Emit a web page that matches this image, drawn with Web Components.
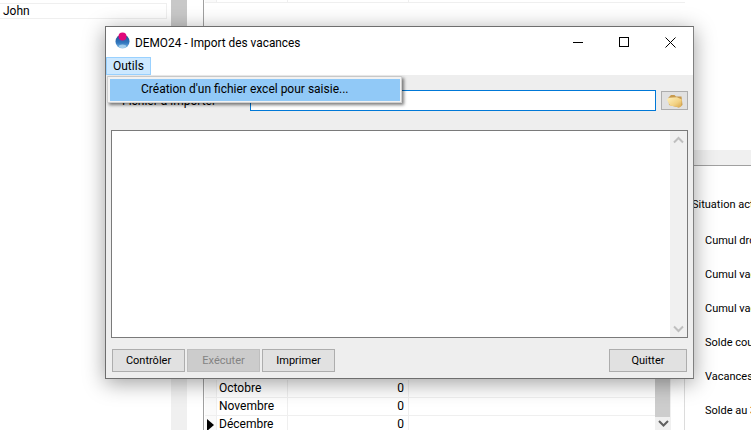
<!DOCTYPE html>
<html lang="fr"><head><meta charset="utf-8"><title>DEMO24</title>
<style>
html,body{margin:0;padding:0;background:#fff;width:751px;height:430px;overflow:hidden;font:12px/16px Roboto,"Noto Sans",sans-serif;color:#000}
</style></head><body>
<app-backdrop>
  <grid-row slot="top" first></grid-row>
  <grid-row slot="rows" month="Octobre" value="0"></grid-row>
  <grid-row slot="rows" month="Novembre" value="0"></grid-row>
  <grid-row slot="rows" month="Décembre" value="0" current></grid-row>
</app-backdrop>
<win-dialog heading="DEMO24 - Import des vacances">
  <win-scrollbar slot="scroll"></win-scrollbar>
  <win-button slot="left">Contrôler</win-button>
  <win-button slot="left" disabled>Exécuter</win-button>
  <win-button slot="left">Imprimer</win-button>
  <win-button slot="right" wide>Quitter</win-button>
</win-dialog>
<script>
function def(name, html, proto){
  const t=document.createElement('template');t.innerHTML=html;
  customElements.define(name,class extends HTMLElement{
    constructor(){super();this.attachShadow({mode:'open'}).appendChild(t.content.cloneNode(true));}
    connectedCallback(){if(proto)proto.call(this,this.shadowRoot);}
  });
}
const chev=d=>`<svg width="11" height="8" viewBox="0 0 11 8"><path d="${d}" fill="none" stroke="currentColor" stroke-width="2"/></svg>`;

def('grid-row',`<style>
:host{display:grid;grid-template-columns:12px 71px 121px 1fr;height:18px;box-sizing:border-box;border-bottom:1px solid #efefef;flex:none}
:host([first]){height:3px}
div{box-sizing:border-box;border-right:1px solid #efefef;white-space:nowrap;line-height:17px}
.i{background:#fafafa;display:flex;align-items:center;justify-content:flex-end;padding-right:2px}
.m{padding-left:2px}.v{text-align:right;padding-right:4px}
svg{display:none}:host([current]) svg{display:block}
</style><div class="i"><svg width="7" height="12" viewBox="0 0 7 12"><path d="M0 0L7 6L0 12Z" fill="#000"/></svg></div><div class="m"></div><div class="v"></div><div style="border:0"></div>`,function(r){
  r.querySelector('.m').textContent=this.getAttribute('month')||'';
  r.querySelector('.v').textContent=this.getAttribute('value')||'';
});

def('app-backdrop',`<style>
:host{display:grid;grid-template-columns:171px 16px 16px 1px 1px 480px 1fr;width:751px;height:430px;overflow:hidden}
.john{margin-top:3px;height:16px;width:167px;box-sizing:border-box;border:1px solid #efefef;border-left:0;padding-left:3px;line-height:15px}
.track{background:#f0f0f0}
.thumb{background:#c8c8c8;height:160px}
.vl{background:#a0a0a0}
.main{display:flex;flex-direction:column;height:430px;overflow:hidden}
.main .sp{flex:1}
.lower{height:264px;flex:none;display:grid;grid-template-columns:450px 16px 1fr;border-right:1px solid #dcdcdc;box-sizing:border-box}
.table{display:flex;flex-direction:column;justify-content:flex-end;overflow:hidden}
.table .rows{margin-bottom:-4px;display:flex;flex-direction:column}
.sb{display:flex;flex-direction:column;background:#f0f0f0}
.sb .th{flex:1;background:#cdcdcd;margin-right:1px}
.sb .ar{height:13px;flex:none;color:#606060;display:flex;align-items:center;justify-content:center;overflow:hidden}
.right{white-space:nowrap;overflow:hidden;display:flex;flex-direction:column;font-size:11px}
.right>*{flex:none}
.band{height:150px}
.band2{height:16px;box-sizing:border-box;background:#f0f0f0;border-bottom:1px solid #a0a0a0}
.right p{margin:0;height:34px;line-height:16px;padding-left:20px}
.right p.h{padding-left:7px;margin-top:31px;height:36px}
</style>
<div><div class="john">John</div></div>
<div class="track"><div class="thumb"></div></div>
<div></div>
<div class="vl"></div>
<div></div>
<div class="main"><slot name="top"></slot><div class="sp"></div>
  <div class="lower">
    <div class="table"><div class="rows"><slot name="rows"></slot></div></div>
    <div class="sb"><div class="th"></div><div class="ar">${chev('M1 1L5.5 5.5L10 1')}</div></div>
    <div></div>
  </div>
</div>
<div class="right"><div class="band"></div><div class="band2"></div>
  <p class="h">Situation act</p><p>Cumul dro</p><p>Cumul vac</p><p>Cumul vac</p><p>Solde cou</p><p>Vacances</p><p>Solde au 3</p>
</div>`);

def('win-scrollbar',`<style>
:host{display:flex;flex-direction:column;justify-content:space-between;width:17px;background:#f0f0f0;color:#bfbfbf}
div{height:17px;display:flex;align-items:center;justify-content:center}
</style><div>${chev('M1 6.5L5.5 2L10 6.5')}</div><div>${chev('M1 1.5L5.5 6L10 1.5')}</div>`);

def('win-button',`<style>
:host{display:flex;align-items:center;justify-content:center;box-sizing:border-box;width:73px;height:23px;border:1px solid #adadad;background:#e1e1e1;white-space:nowrap;font-size:11px}
:host([wide]){width:78px}
:host([disabled]){background:#cccccc;border-color:#bfbfbf;color:#838383}
</style><slot></slot>`);

def('win-dialog',`<style>
:host{display:flex;flex-direction:column;position:absolute;left:105px;top:26px;width:589px;height:353px;box-sizing:border-box;border:1px solid #6e6e6e;border-right-color:#808080;background:#f0f0f0;box-shadow:0 4px 20px rgba(0,0,0,.38)}
.title{height:30px;background:#fff;display:flex;align-items:center;flex:none}
.logo{margin:0 5px 4px 9px;flex:none;display:block}
.htext{flex:1;white-space:nowrap;padding-top:1px;font-size:11.85px}
.ctl{width:46px;height:30px;display:flex;align-items:center;justify-content:center}
.menu{height:18px;background:#fff;flex:none;display:flex}
.outils{box-sizing:border-box;width:45px;height:18px;background:#cce8ff;border:1px solid #99d1ff;padding-left:6px;line-height:17px}
.body{flex:1;background:#eeeeee;display:flex;flex-direction:column;padding:15px 5px 6px 5px;min-height:0}
.file{display:flex;align-items:center;height:21px;flex:none}
.file label{width:139px;padding:0 0 0 11px;box-sizing:border-box;white-space:nowrap}
.input{width:406px;height:21px;box-sizing:border-box;background:#fff;border:1.5px solid #0078d7}
.browse{margin-left:5px;width:27px;height:19px;box-sizing:border-box;border:1px solid #adadad;background:#e1e1e1;display:flex;align-items:center;justify-content:center}
.memo{margin-top:19px;height:208px;flex:none;box-sizing:border-box;background:#fff;border:1px solid #7a7a7a;display:flex;justify-content:flex-end}
.foot{margin-top:11px;display:flex;justify-content:space-between;padding:0 1px}
.foot div{display:flex;gap:2px}
.popup{position:absolute;left:1px;top:49px;width:295px;height:27px;box-sizing:border-box;border:1px solid #cfcfcf;border-top-color:#c8c8c8;background:#f2f2f2;padding:2px;box-shadow:2px 2px 3px rgba(0,0,0,.5)}
.item{height:22px;width:290px;background:#91c9f7;padding-left:31px;box-sizing:border-box;line-height:21px;white-space:nowrap}
</style>
<div class="title">
  <svg class="logo" width="15" height="17" viewBox="0 0 15 17"><defs><linearGradient id="b" x1="0" y1="0" x2="0" y2="1"><stop offset="0" stop-color="#1f4f8c"/><stop offset=".6" stop-color="#3178c0"/><stop offset="1" stop-color="#8ec4e8"/></linearGradient></defs><circle cx="7.5" cy="9.5" r="7" fill="url(#b)"/><ellipse cx="7.5" cy="14.2" rx="3.6" ry="1.7" fill="#b6dbf1" opacity=".75"/><circle cx="7.5" cy="4.5" r="4" fill="#e0087a"/></svg>
  <div class="htext"></div>
  <div class="ctl"><svg width="10" height="10" viewBox="0 0 10 10"><path d="M0 5.5H10" stroke="#000"/></svg></div>
  <div class="ctl"><svg width="10" height="10" viewBox="0 0 10 10"><rect x=".5" y=".5" width="9" height="9" fill="none" stroke="#000"/></svg></div>
  <div class="ctl"><svg width="11" height="11" viewBox="0 0 11 11"><path d="M.5 .5L10.5 10.5M10.5 .5L.5 10.5" stroke="#000"/></svg></div>
</div>
<div class="menu"><div class="outils">Outils</div></div>
<div class="body">
  <div class="file"><label>Fichier à importer</label><div class="input"></div>
    <div class="browse"><svg width="17" height="14" viewBox="0 0 17 14"><defs><linearGradient id="f" x1="0" y1="0" x2="1" y2="1"><stop offset="0" stop-color="#fff2c0"/><stop offset=".6" stop-color="#f3d283"/><stop offset="1" stop-color="#d8a548"/></linearGradient></defs><path d="M2.5 3.5L5 1H8.5L10 2.5H15.5L16.5 11L13 13.5L3 11Z" fill="#c79a4e"/><path d="M.8 5.5L3 3.8L11 3.2L15.8 5.5L15.3 12.2L13 13.5L4 11.6Z" fill="url(#f)"/></svg></div>
  </div>
  <div class="memo"><slot name="scroll"></slot></div>
  <div class="foot"><div><slot name="left"></slot></div><div><slot name="right"></slot></div></div>
</div>
<div class="popup"><div class="item">Création d'un fichier excel pour saisie...</div></div>`,function(r){
  r.querySelector('.htext').textContent=this.getAttribute('heading');
});
</script>
</body></html>
